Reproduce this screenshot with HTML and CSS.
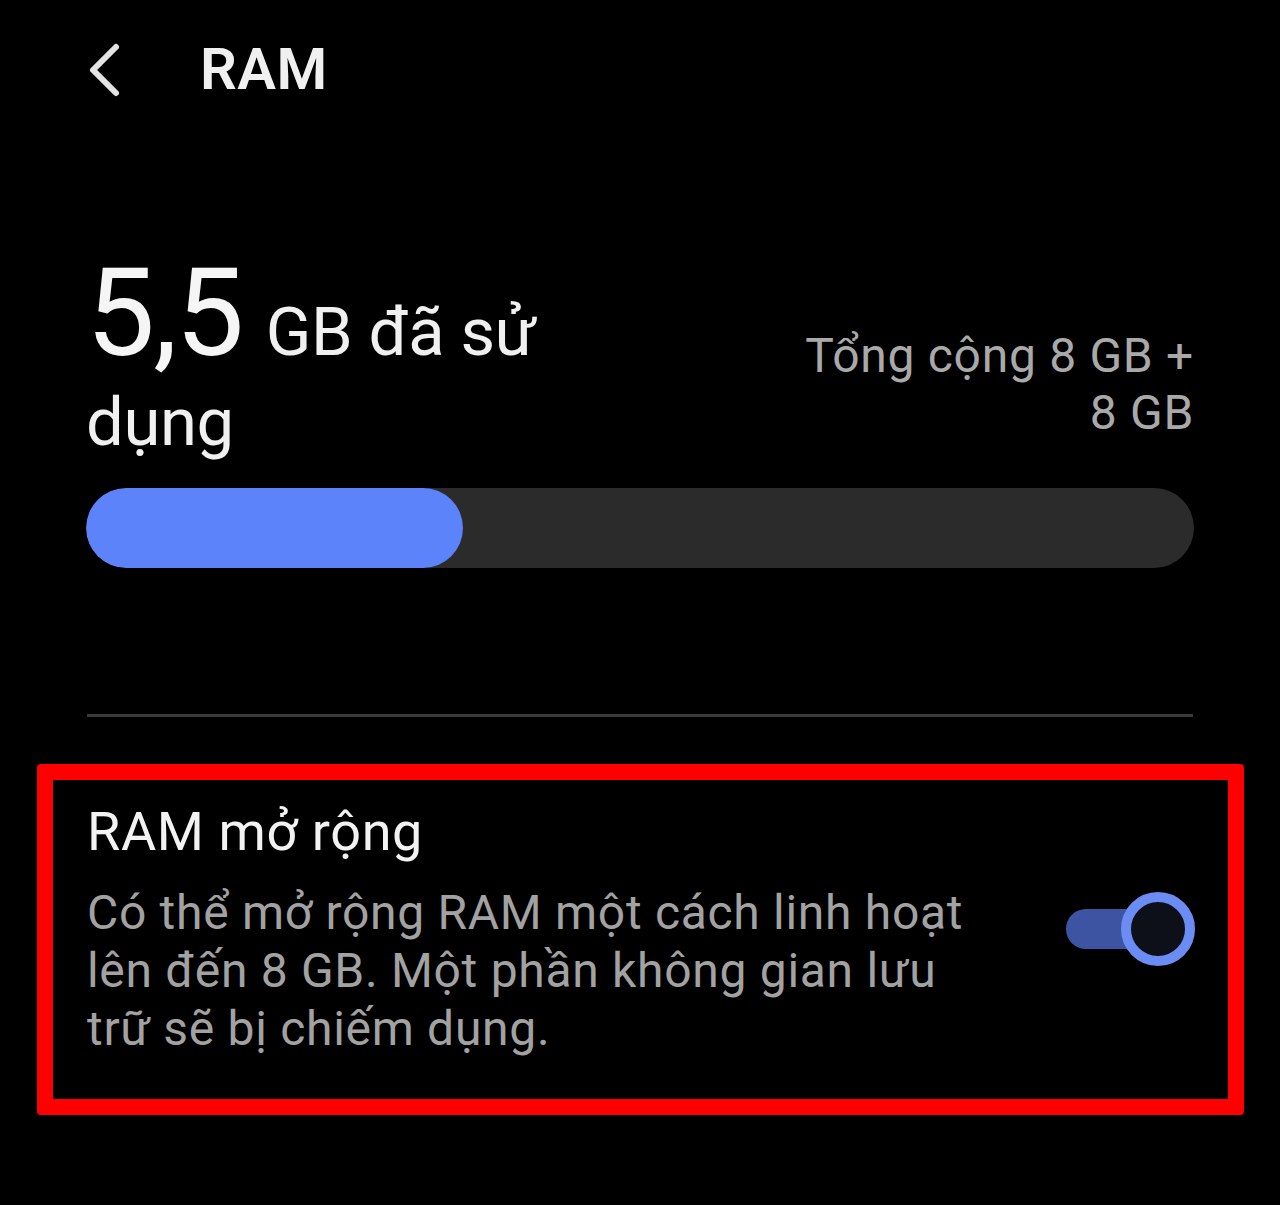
FILE: index.html
```html
<!DOCTYPE html>
<html lang="vi">
<head>
<meta charset="utf-8">
<title>RAM</title>
<link rel="stylesheet" href="styles.css">
</head>
<body>
<div class="screen">
  <header class="topbar">
    <button class="back" aria-label="Quay lại">
      <svg viewBox="0 0 40 60" width="40" height="60">
        <polyline points="29,7 6,30 29,53" fill="none" stroke="#e4e4e4" stroke-width="6" stroke-linecap="round" stroke-linejoin="round"/>
      </svg>
    </button>
    <h1 class="title">RAM</h1>
  </header>

  <section class="usage">
    <div class="usage-head">
      <p class="used"><span class="used-num">5,5</span> GB đã sử dụng</p>
      <p class="total">Tổng cộng 8 GB + 8&nbsp;GB</p>
    </div>
    <div class="meter">
      <div class="meter-fill" style="width: 34%"></div>
    </div>
  </section>

  <hr class="divider">

  <section class="option">
    <div class="option-text">
      <h2 class="option-title">RAM mở rộng</h2>
      <p class="option-desc">Có thể mở rộng RAM một cách linh hoạt lên đến 8 GB. Một phần không gian lưu trữ sẽ bị chiếm dụng.</p>
    </div>
    <div class="switch is-on" role="switch" aria-checked="true">
      <span class="switch-track"></span>
      <span class="switch-thumb"></span>
    </div>
  </section>
</div>
</body>
</html>
```

FILE: styles.css
```css
html, body {
  margin: 0;
  padding: 0;
  background: #000;
}

body {
  font-family: Roboto, "Noto Sans", "Liberation Sans", sans-serif;
  color: #f2f2f2;
}

.screen {
  width: 1280px;
  height: 1205px;
  overflow: hidden;
}

/* top app bar */
.topbar {
  height: 138px;
  display: flex;
  align-items: center;
  padding-left: 87px;
}

.back {
  width: 40px;
  height: 60px;
  padding: 0;
  border: 0;
  background: none;
  display: flex;
  margin-top: 1px;
}

.title {
  margin: 0 0 0 73px;
  font-size: 58px;
  line-height: 58px;
  font-weight: 600;
  color: #f0f0f0;
  letter-spacing: 0.5px;
}

/* memory usage block */
.usage {
  margin-top: 130px;
  padding: 0 86px;
}

.usage-head {
  display: flex;
  justify-content: space-between;
  align-items: flex-start;
}

.used {
  margin: 0;
  width: 520px;
  font-size: 67px;
  line-height: 90px;
  letter-spacing: -0.4px;
  color: #f0f0f0;
}

.used-num {
  margin-right: 7px;
  font-size: 123px;
  font-weight: 400;
  letter-spacing: -2px;
  color: #f5f5f5;
}

.total {
  margin: 60px 0 0;
  width: 400px;
  text-align: right;
  font-size: 48px;
  line-height: 56.5px;
  letter-spacing: 0.7px;
  color: #a9a9a9;
}

.meter {
  margin-top: 21px;
  height: 80px;
  border-radius: 40px;
  background: #2b2b2b;
  overflow: hidden;
}

.meter-fill {
  height: 100%;
  border-radius: 40px;
  background: #5c83fa;
}

.divider {
  margin: 146px 87px 0 87px;
  height: 3px;
  border: 0;
  background: #3b3b3b;
}

/* expandable RAM setting, outlined */
.option {
  margin: 47px 36px 0 37px;
  border: 16px solid #ff0000;
  border-radius: 4px;
  padding: 20px 33px 41px 34px;
  display: flex;
  align-items: center;
  justify-content: space-between;
}

.option-text {
  width: 900px;
}

.option-title {
  margin: 0;
  font-size: 54px;
  line-height: 64px;
  font-weight: 400;
  letter-spacing: 0.6px;
  color: #f2f2f2;
}

.option-desc {
  margin: 20px 0 0;
  font-size: 48px;
  line-height: 58px;
  letter-spacing: 0.7px;
  color: #a2a2a2;
}

.switch {
  position: relative;
  width: 129px;
  height: 74px;
  flex: none;
}

.switch-track {
  position: absolute;
  left: 0;
  top: 17px;
  width: 90px;
  height: 40px;
  border-radius: 20px;
  background: #3d54a3;
}

.switch-thumb {
  position: absolute;
  right: 0;
  top: 0;
  width: 54px;
  height: 54px;
  border: 10px solid #6b8cf3;
  border-radius: 50%;
  background: #0d0f19;
}
```
